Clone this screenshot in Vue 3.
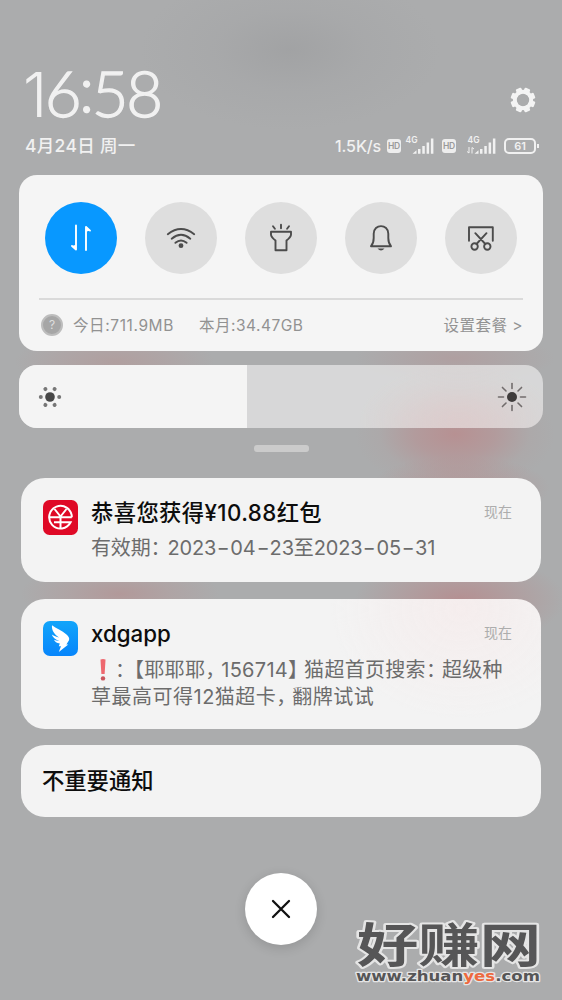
<script setup>
const notices = [
  { id: 'gift', title: '恭喜您获得¥10.88红包', time: '现在' },
  { id: 'ding', title: 'xdgapp', time: '现在' },
]
const level = 43.5
const dimDots = [0, 60, 120, 180, 240, 300]
const rays = [0, 45, 90, 135, 180, 225, 270, 315]
const teeth = [0, 45, 90, 135, 180, 225, 270, 315]
const signals = [
  { id: 'sim1', data: false },
  { id: 'sim2', data: true },
]
</script>

<template>
  <main class="shade">
    <header class="top">
      <div class="top-row">
        <div class="clock"><span class="one">1</span>6<span class="tick">:</span>58</div>
        <svg class="gear" width="28" height="28" viewBox="-14 -14 28 28">
          <rect v-for="a in teeth" :key="a" x="-3" y="-12.4" width="6" height="6" rx="1.2" :transform="`rotate(${a + 22.5})`" fill="#f4f4f4" />
          <circle r="8.2" fill="none" stroke="#f4f4f4" stroke-width="4" />
        </svg>
      </div>
      <div class="top-row status-row">
        <div class="date">4月24日 周一</div>
        <div class="status">
          <span class="speed">1.5K/s</span>
          <template v-for="s in signals" :key="s.id">
            <span class="hd">HD</span>
            <svg class="signal" width="30" height="20" viewBox="0 0 30 20">
              <text x=".5" y="7.4" class="net" textLength="12">4G</text>
              <path d="M7.5 17.8l4-3.5V17.8zM13 13h2.5v4.8H13zM17.3 10h2.5v7.8h-2.5zM21.6 6.5h2.5v11.3h-2.5zM25.9 2.5h2.5v15.3h-2.5z" fill="#f1f1f1" />
              <path v-if="s.data" d="M2 11v6l-2-1.5M5 17.5v-6l2 1.5" fill="none" stroke="#f1f1f1" stroke-width="1" />
            </svg>
          </template>
          <span class="battery">61</span>
        </div>
      </div>
    </header>

    <section class="panel">
      <div class="toggles">
        <span class="toggle on">
          <svg width="36" height="36" viewBox="0 0 36 36"><path d="M13 5.5V29.5L9 26M23 30V7L27 10.6" /><path class="solid" d="M13 24.8V30L9 26zM23 11.8V6.2L27 10.6z" /></svg>
        </span>
        <span class="toggle">
          <svg width="36" height="36" viewBox="0 0 36 36"><path d="M4.8 14.2Q18 3.8 31.2 14.2M8.7 18.7Q18 11 27.3 18.7M12.4 22.8Q18 18.1 23.6 22.8" /><circle class="dot" cx="18" cy="25.7" r="2.4" /></svg>
        </span>
        <span class="toggle">
          <svg width="36" height="36" viewBox="0 0 36 36"><path d="M18 4.8V8.3M10 6.2L11.9 8.7M26 6.2L24.1 8.7M8 11.8H28V14.8Q27.6 17.2 23.5 20.5V30.3H12.5V20.5Q8.4 17.2 8 14.8z" /></svg>
        </span>
        <span class="toggle">
          <svg width="36" height="36" viewBox="0 0 36 36"><path d="M8 26.2C10 24 10.7 21 10.7 18V13.8C10.7 3.6 25.3 3.6 25.3 13.8V18C25.3 21 26 24 28 26.2z" /><path class="dot" d="M14.5 28.5H21.5Q18 32.5 14.5 28.5z" /></svg>
        </span>
        <span class="toggle">
          <svg width="36" height="36" viewBox="0 0 36 36"><path d="M6 20.7V7.3H29.8V20.7M12.3 13.2L22.3 24M23.5 13.2L13.5 24" /><circle cx="11.6" cy="26.5" r="3.2" /><circle cx="24.3" cy="26.5" r="3.2" /></svg>
        </span>
      </div>
      <div class="usage">
        <span class="help">?</span>
        <span class="today">今日:711.9MB</span>
        <span class="month">本月:34.47GB</span>
        <span class="plan">设置套餐 &gt;</span>
      </div>
    </section>

    <section class="brightness">
      <div class="fill" :style="{ width: level + '%' }"></div>
      <svg class="sun" width="32" height="32" viewBox="-16 -16 32 32">
        <circle r="4.8" fill="#474747" />
        <circle v-for="a in dimDots" :key="a" cx="9.2" cy="0" r="2" :transform="`rotate(${a})`" fill="#777" />
      </svg>
      <svg class="sun" width="32" height="32" viewBox="-16 -16 32 32">
        <circle r="5" fill="#3f3c3c" />
        <path v-for="a in rays" :key="a" d="M8.5 0H13.5" stroke="#716c6c" stroke-width="1.6" stroke-linecap="round" :transform="`rotate(${a})`" />
      </svg>
    </section>

    <div class="handle"></div>

    <section class="notices">
      <article v-for="n in notices" :key="n.id" class="card" :class="n.id">
        <svg v-if="n.id === 'gift'" class="app" width="35" height="35" viewBox="0 0 35 35">
          <rect width="35" height="35" rx="6.5" fill="#df0926" />
          <g fill="none" stroke="#fff" stroke-width="2">
            <path d="M28.8 17.3A11.3 11.3 0 1 0 27.6 22.3H11" />
            <path d="M11.5 9L17.5 16.5L23.5 9M6.5 17.3H28.8M17.5 17V28" />
          </g>
        </svg>
        <svg v-else class="app" width="35" height="35" viewBox="0 0 35 35">
          <defs><linearGradient id="sky" x1="0" y1="0" x2="0" y2="1"><stop offset="0" stop-color="#12a5fa" /><stop offset="1" stop-color="#0785fb" /></linearGradient></defs>
          <rect width="35" height="35" rx="7" fill="url(#sky)" />
          <path d="M9 4.2C13 7.3 19 9.4 23.5 13.5C25.8 15.5 26.7 17.4 26 19.3L23.4 23.5H25.3L15.8 31L18 25.3H15.8L16.8 22.5C13.7 22.4 11.7 20.7 11 18.8C12.7 19.6 14.7 20 16.2 19.8C12.2 18.5 9.7 16.2 8.8 13.5C11 15 13.6 16 16 16.4C11.3 13.5 8.4 9 9 4.2Z" fill="#fff" />
        </svg>
        <div class="content">
          <div class="headline"><h2>{{ n.title }}</h2><time>{{ n.time }}</time></div>
          <p v-if="n.id === 'gift'" class="valid">有效期<span class="narrow">：</span>2023<i>-</i>04<i>-</i>23至2023<i>-</i>05<i>-</i>31</p>
          <template v-else>
            <p class="line1"><svg class="bang" width="22" height="24" viewBox="0 0 22 24"><path d="M8.5 1.5Q11 .5 13.5 1.5L12.6 16H9.4z" fill="#ee686f" /><circle cx="11" cy="20.4" r="2.2" fill="#ca555d" /></svg><span class="colon">：</span>【耶耶耶<span class="comma">，</span>156714<span class="comma">】</span>猫超首页搜索<span class="comma">：</span>超级种</p>
            <p class="line2">草最高可得12猫超卡<span class="comma">，</span>翻牌试试</p>
          </template>
        </div>
      </article>
      <article class="card minor"><h2>不重要通知</h2></article>
    </section>

    <button class="dismiss" aria-label="关闭">
      <svg width="20" height="20" viewBox="0 0 20 20"><path d="M2 2L18 18M18 2L2 18" stroke="#111" stroke-width="2.3" stroke-linecap="round" /></svg>
    </button>

    <svg class="mark" width="200" height="76" viewBox="0 0 200 76">
      <g class="brand" transform="translate(10 0) scale(1 .8)">
        <text x="-1" y="55.5" textLength="184" lengthAdjust="spacingAndGlyphs">好赚网</text>
      </g>
      <text class="site" x="8" y="62.8" textLength="184" lengthAdjust="spacingAndGlyphs">www.zhuan<tspan fill="#ed693f">yes</tspan>.com</text>
    </svg>
  </main>
</template>

<style>
body { margin: 0; }
</style>

<style scoped>
.shade {
  position: relative;
  box-sizing: border-box;
  width: 562px;
  height: 1000px;
  overflow: hidden;
  display: flex;
  flex-direction: column;
  font-family: Inter, "Noto Sans CJK SC", sans-serif;
  background:
    radial-gradient(ellipse 100px 58px at 455px 434px, rgba(190, 128, 130, .62), rgba(187, 134, 136, .45) 40%, rgba(180, 150, 150, .14) 75%, transparent),
    radial-gradient(ellipse 100px 32px at 115px 362px, rgba(186, 135, 133, .35), rgba(186, 140, 140, .22) 50%, transparent),
    radial-gradient(ellipse 100px 32px at 120px 594px, rgba(186, 130, 130, .45), rgba(186, 140, 140, .25) 50%, transparent),
    radial-gradient(ellipse 105px 46px at 460px 600px, rgba(188, 120, 123, .55), rgba(186, 130, 132, .33) 50%, transparent),
    radial-gradient(ellipse 100px 26px at 455px 358px, rgba(186, 130, 132, .3), transparent),
    radial-gradient(ellipse 90px 32px at 460px 488px, rgba(188, 125, 127, .45), transparent),
    radial-gradient(ellipse 150px 80px at 290px 50px, rgba(152, 153, 155, .5), rgba(160, 161, 163, .3) 50%, transparent),
    #abacad;
}
h2, p { margin: 0; }
h2 { font-weight: 500; }
.top { height: 175px; box-sizing: border-box; padding: 56px 23px 0 25px; color: #f1f1f1; }
.top-row { display: flex; justify-content: space-between; align-items: center; }
.clock { height: 77px; line-height: 73px; font-family: Lato, sans-serif; font-size: 63.5px; font-weight: 300; letter-spacing: -2.5px; white-space: nowrap; -webkit-text-stroke: 1.3px #f1f1f1; }
.one { font-family: Inter, sans-serif; font-size: 61.5px; font-weight: 300; margin-left: -2px; -webkit-text-stroke: 0; }
.tick { position: relative; top: -5px; }
.gear { margin: 10px 2px 0 0; }
.status-row { height: 26px; }
.date { font-size: 17.5px; font-weight: 500; letter-spacing: .3px; margin-top: -3px; }
.status { display: flex; align-items: center; margin-right: 3px; }
.speed { font-size: 16px; font-weight: 500; width: 52px; letter-spacing: -.1px; white-space: nowrap; }
.hd { width: 14px; height: 14px; border-radius: 3px; background: #ededed; color: #999; font-size: 8.5px; line-height: 14px; text-align: center; font-weight: 600; letter-spacing: -.2px; }
.signal { margin: 0 7px 0 4px; overflow: visible; }
.signal:nth-of-type(2) { margin: 0 7px 0 11px; }
.net { font: 600 8.5px Inter, sans-serif; fill: #f1f1f1; }
.battery { position: relative; width: 28px; height: 12px; border: 2px solid #f1f1f1; border-radius: 5px; font-size: 11px; line-height: 12px; text-align: center; font-weight: 600; }
.battery::after { content: ""; position: absolute; right: -5px; top: 4px; width: 2px; height: 4px; background: #f1f1f1; }
.panel { height: 176px; margin: 0 19px; border-radius: 18px; background: #f5f5f5; box-sizing: border-box; padding: 26.5px 20px 0; }
.toggles { display: flex; justify-content: space-between; padding: 0 6px 0 6px; height: 96px; border-bottom: 2px solid #dadada; }
.toggle { width: 72px; height: 72px; border-radius: 50%; background: #dedede; display: flex; align-items: center; justify-content: center; }
.toggle svg { fill: none; stroke: #4c4c4c; stroke-width: 1.9; stroke-linejoin: round; stroke-linecap: round; }
.toggle .dot { fill: #4c4c4c; stroke: none; }
.toggle.on { background: #0898ff; }
.toggle.on svg { stroke: #fff; }
.toggle .solid { fill: #fff; stroke: none; }
.usage { height: 50px; display: flex; align-items: center; font-size: 15.5px; color: #929292; white-space: nowrap; }
.help { width: 18px; height: 18px; border: 2px solid #bdbdbd; background: #a6a6a6; border-radius: 50%; margin: 0 10px 0 2px; text-align: center; line-height: 18px; font-size: 12px; color: #dedede; }
.today { width: 126px; letter-spacing: .6px; margin-top: -2px; }
.month { letter-spacing: .5px; margin-top: -2px; }
.plan { margin-left: auto; letter-spacing: .5px; margin-top: -2px; }
.brightness { position: relative; display: flex; align-items: center; justify-content: space-between; height: 63px; box-sizing: border-box; margin: 14px 19px 0; padding: 0 15px; border-radius: 18px; overflow: hidden; background: radial-gradient(ellipse 100px 55px at 440px 55px, rgba(222, 200, 200, .5), transparent), rgba(234, 234, 233, .7); }
.fill { position: absolute; left: 0; top: 0; bottom: 0; background: #f4f4f4; }
.sun { position: relative; }
.handle { width: 55px; height: 7px; border-radius: 3px; background: #cbcbcb; margin: 17px auto 0; }
.notices { margin: 25.5px 21px 0; display: flex; flex-direction: column; }
.card { box-sizing: border-box; border-radius: 24px; background: #f3f3f3; display: flex; padding: 22px 28px 0 22px; }
.gift { height: 104px; margin-bottom: 17px; }
.ding { height: 130.5px; margin-bottom: 15.5px; background: radial-gradient(ellipse 130px 110px at 440px 10px, #f5eded, transparent), #f3f3f3; }
.minor { height: 72.5px; padding: 0 22px 3px 21px; align-items: center; }
.app { flex: none; margin-right: 13px; }
.content { flex: 1; min-width: 0; white-space: nowrap; }
.headline { display: flex; justify-content: space-between; align-items: center; height: 28px; margin-top: -1px; }
h2 { color: #0d0d0d; font-size: 22.3px; letter-spacing: 0; }
.gift h2 { letter-spacing: .4px; margin-top: -3px; }
time { font-size: 14px; color: #adadad; margin: -3px 1px 0 0; }
p { color: #6c6c6c; font-size: 20px; line-height: 27.5px; height: 27.5px; }
.valid { margin-top: 8.5px; letter-spacing: -.15px; }
.valid i { display: inline-block; font-style: normal; width: 14px; text-align: center; transform: scaleX(1.4); }
.narrow { letter-spacing: -3px; }
.line1 { margin-top: 9px; letter-spacing: .3px; }
.line2 { letter-spacing: .5px; }
.bang { vertical-align: -5px; margin-left: 1px; margin-right: 1px; }
.colon { letter-spacing: -1px; }
.comma { letter-spacing: -4px; }
.mark { position: absolute; right: 14px; bottom: 6px; overflow: visible; }
.brand { font: 700 58px "Noto Sans CJK SC", sans-serif; fill: #565657; stroke: #e5e5e5; stroke-width: 5px; paint-order: stroke; stroke-linejoin: round; }
.site { font: 700 14px "DejaVu Sans", sans-serif; fill: #565657; stroke: #e5e5e5; stroke-width: 2.5px; paint-order: stroke; stroke-linejoin: round; }
.dismiss { width: 72.5px; height: 72.5px; border: 0; padding: 0; border-radius: 50%; margin: 55.5px auto 0; background: #fff; display: flex; align-items: center; justify-content: center; box-shadow: 0 3px 12px rgba(0, 0, 0, .14); }
</style>
